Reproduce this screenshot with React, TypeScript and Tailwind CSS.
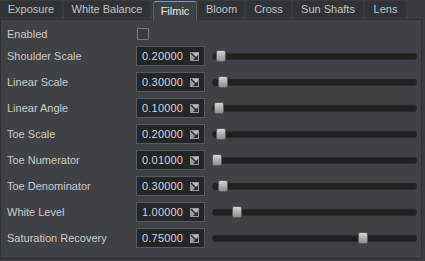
import React from "react";

const tabs = [
  { name: "Exposure", w: "w-[62px]", ml: "ml-0" },
  { name: "White Balance", w: "w-[86px]", ml: "ml-[2px]" },
  { name: "Filmic", w: "w-[44px]", ml: "ml-[3px]", active: true },
  { name: "Bloom", w: "w-[45px]", ml: "ml-[2px]" },
  { name: "Cross", w: "w-[45px]", ml: "ml-[2px]" },
  { name: "Sun Shafts", w: "w-[70px]", ml: "ml-[2px]" },
  { name: "Lens", w: "w-[41px]", ml: "ml-[2px]" },
];

const rows = [
  { label: "Shoulder Scale", value: 0.2, max: 10 },
  { label: "Linear Scale", value: 0.3, max: 10 },
  { label: "Linear Angle", value: 0.1, max: 10 },
  { label: "Toe Scale", value: 0.2, max: 10 },
  { label: "Toe Numerator", value: 0.01, max: 10 },
  { label: "Toe Denominator", value: 0.3, max: 10 },
  { label: "White Level", value: 1.0, max: 10 },
  { label: "Saturation Recovery", value: 0.75, max: 1 },
];

function SpinIcon() {
  return (
    <svg width="9" height="9" viewBox="0 0 9 9" className="shrink-0">
      <rect x="0" y="0" width="9" height="9" fill="#9a9a9a" />
      <polygon points="2,1 8,1 8,7" fill="#b8b8b8" />
      <polygon points="8,3 8,8 3,8" fill="#303030" />
      <line x1="1" y1="1" x2="6.5" y2="6.5" stroke="#303030" strokeWidth="1.5" />
    </svg>
  );
}

function Slider({ value, max }: { value: number; max: number }) {
  const travel = 195;
  const left = Math.round((value / max) * travel);
  return (
    <div className="relative flex-1 h-[20px] flex items-center">
      <div className="w-full h-[7px] rounded-[3px] bg-[#202020] border border-[#2a2a2a]" />
      <div
        className="absolute top-[4px] w-[10px] h-[12px] rounded-[2px] border border-[#5a5a5a] bg-gradient-to-b from-[#d4d4d4] to-[#8e8e8e]"
        style={{ left }}
      />
    </div>
  );
}

export default function App() {
  return (
    <div
      className="w-[425px] h-[261px] bg-[#3a3b3e] text-[11px] text-[#cccccc] overflow-hidden"
      style={{ fontFamily: '"Liberation Sans", Arial, sans-serif' }}
    >
      <div className="flex h-[19px] pt-[1px] items-end">
        {tabs.map((t) =>
          t.active ? (
            <div
              key={t.name}
              className={`${t.w} ${t.ml} h-[19px] relative z-10 -mb-[1px] flex items-center justify-center rounded-t-[3px] border border-b-0 border-[#5b5d61] border-t-[#7a9cbc] bg-[#404144] text-[#ececec]`}
            >
              {t.name}
            </div>
          ) : (
            <div
              key={t.name}
              className={`${t.w} ${t.ml} h-[17px] mb-[1px] flex items-center justify-center rounded-t-[3px] bg-[#313235] text-[#c4c4c4]`}
            >
              {t.name}
            </div>
          )
        )}
      </div>
      <div className="w-[422px] h-[240px] border border-[#2f3033] bg-[#404144] pl-[6px] pr-[4px] pt-[8px] flex flex-col gap-[6px]">
        <div className="flex items-center h-[12px]">
          <div className="w-[130px]">Enabled</div>
          <div className="w-[12px] h-[12px] border border-[#7c7d80] bg-[#38393c] rounded-[1px]" />
        </div>
        {rows.map((r) => (
          <div key={r.label} className="flex items-center h-[20px]">
            <div className="w-[129px] whitespace-nowrap">{r.label}</div>
            <div className="w-[69px] h-[20px] border border-[#58595c] bg-[#242527] flex items-center pl-[5px] pr-[5px] justify-between">
              <span className="text-[#d6d6d6] tracking-[0.2px]">{r.value.toFixed(5)}</span>
              <SpinIcon />
            </div>
            <div className="w-[7px]" />
            <Slider value={r.value} max={r.max} />
          </div>
        ))}
      </div>
    </div>
  );
}
